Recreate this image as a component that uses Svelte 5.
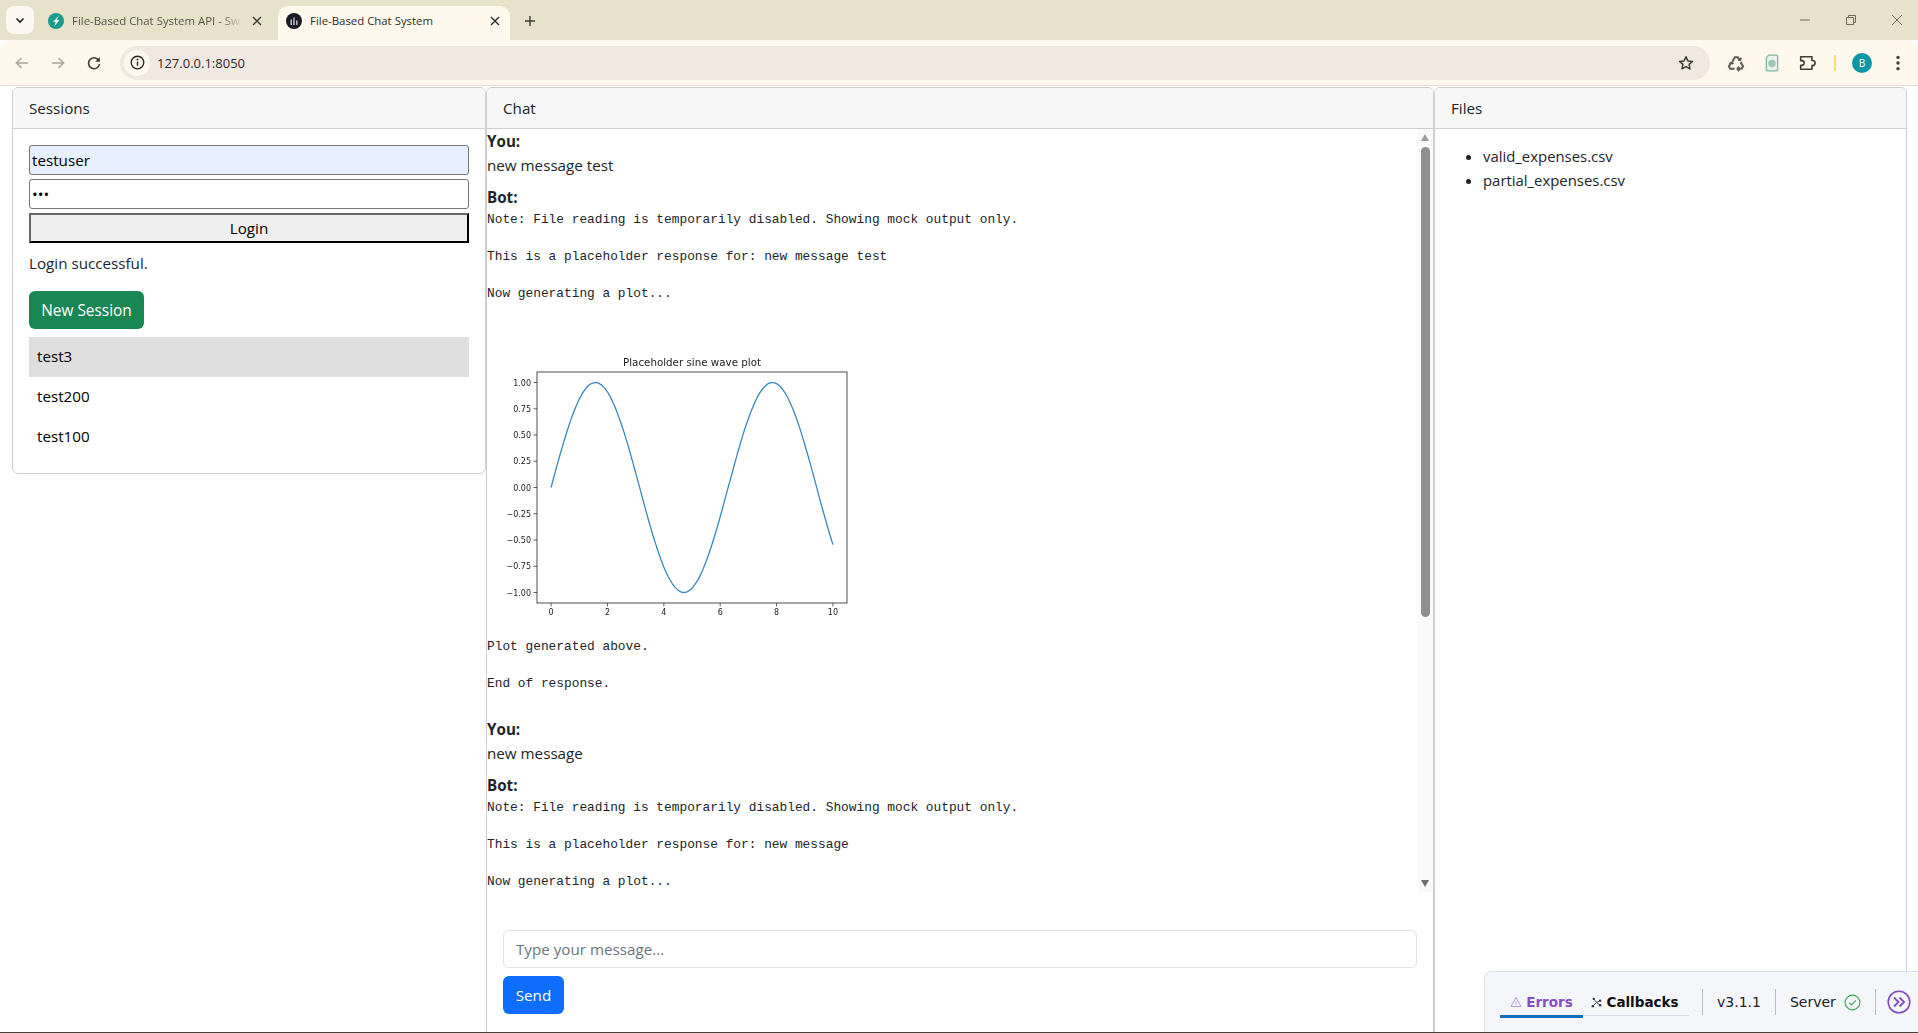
<script>
	const sessions = ['test3', 'test200', 'test100'];
	const files = ['valid_expenses.csv', 'partial_expenses.csv'];
	const messages = ['new message test', 'new message'];

	const note = 'Note: File reading is temporarily disabled. Showing mock output only.';

	// matplotlib default axes inside a 400x300 image
	const axes = { left: 50, top: 36, width: 310, height: 231 };
	const px = (x) => axes.left + ((x + 0.5) / 11) * axes.width;
	const py = (y) => axes.top + ((1.1 - y) / 2.2) * axes.height;

	const curve = Array.from({ length: 101 }, (_, i) => {
		const x = i / 10;
		return `${px(x).toFixed(1)},${py(Math.sin(x)).toFixed(1)}`;
	}).join(' ');

	const xTicks = [0, 2, 4, 6, 8, 10];
	const yTicks = [1, 0.75, 0.5, 0.25, 0, -0.25, -0.5, -0.75, -1];
	const yLabel = (v) => (v < 0 ? '\u2212' : '') + Math.abs(v).toFixed(2);
</script>

<div class="window">
	<div class="tabstrip">
		<button class="tabsearch" aria-label="Search tabs">
			<svg width="12" height="12" viewBox="0 0 12 12"><path d="M2.5 4.5 6 8l3.5-3.5" fill="none" stroke="#1f1f1f" stroke-width="1.6" /></svg>
		</button>
		<div class="tab first">
			<svg class="favicon" viewBox="0 0 16 16"><circle cx="8" cy="8" r="8" fill="#199a8b" /><path d="M11 2.500 5 9h2.800l-1.600 4.500L11.500 7H8.700z" fill="#fff" /></svg>
			<span class="tab-title faded">File-Based Chat System API - Sw</span>
			<svg class="tab-close" viewBox="0 0 10 10"><path d="M1 1l8 8M9 1l-8 8" stroke="#3b3b3b" stroke-width="1.4" /></svg>
		</div>
		<div class="tab active">
			<svg class="favicon" viewBox="0 0 16 16"><circle cx="8" cy="8" r="8" fill="#1a1a22" /><path d="M4.500 6.500h1.400V12H4.500zM7.300 4.500h1.400V12H7.300zM10.100 7.500h1.400V12h-1.400z" fill="#c9c9d2" /></svg>
			<span class="tab-title">File-Based Chat System</span>
			<svg class="tab-close" viewBox="0 0 10 10"><path d="M1 1l8 8M9 1l-8 8" stroke="#2b2b2b" stroke-width="1.4" /></svg>
		</div>
		<svg class="newtab" viewBox="0 0 12 12"><path d="M6 1v10M1 6h10" stroke="#3b3b3b" stroke-width="1.4" /></svg>
		<div class="winctl">
			<svg viewBox="0 0 12 12"><path d="M1 6h10" stroke="#6f6a5c" /></svg>
			<svg viewBox="0 0 12 12"><path d="M1.500 3.500h7v7h-7zM3.500 3.500v-2h7v7h-2" fill="none" stroke="#6f6a5c" /></svg>
			<svg viewBox="0 0 12 12"><path d="M1 1l10 10M11 1 1 11" stroke="#6f6a5c" /></svg>
		</div>
	</div>

	<div class="toolbar">
		<svg class="navicon" viewBox="0 0 16 16"><path d="M14 8H2.500M7.500 3l-5 5 5 5" fill="none" stroke="#a8a59c" stroke-width="1.500" /></svg>
		<svg class="navicon" viewBox="0 0 16 16"><path d="M2 8h11.500M8.500 3l5 5-5 5" fill="none" stroke="#a8a59c" stroke-width="1.500" /></svg>
		<svg class="navicon" viewBox="0 0 16 16"><path d="M13.200 6.300A5.500 5.500 0 1 0 13.500 9" fill="none" stroke="#3f3c33" stroke-width="1.600" /><path d="M13.800 2.200v4.600H9.200z" fill="#3f3c33" /></svg>
		<div class="omnibox">
			<span class="chip">
				<svg viewBox="0 0 16 16" width="15" height="15"><circle cx="8" cy="8" r="6.700" fill="none" stroke="#26241f" stroke-width="1.400" /><path d="M8 7v4.500" stroke="#26241f" stroke-width="1.500" /><circle cx="8" cy="4.800" r="1" fill="#26241f" /></svg>
			</span>
			<span class="url">127.0.0.1:8050</span>
			<svg class="star" viewBox="0 0 16 16"><path d="M8 1.800l1.900 4.100 4.500.5-3.300 3 .9 4.500L8 11.600l-4 2.300.9-4.500-3.300-3 4.500-.5z" fill="none" stroke="#3f3c33" stroke-width="1.500" stroke-linejoin="round" /></svg>
		</div>
		<div class="exts">
			<svg viewBox="0 0 16 16"><path d="M4.800 6.700 7 2.800h2.600l1.400 2.400M9.800 5.300l2.100-.2.500-1.800M12 7.200l2.300 3.700-1.300 2.300h-2.500M10.800 11.200l-1.500 2 1.500 2M6.800 13.200H2.900L1.700 11l1.900-3.200M2.300 8.500l2-.9 1.300 1.400" fill="none" stroke="#5f5c55" stroke-width="1.800" /></svg>
			<svg viewBox="0 0 16 16"><path d="M5 1h7a1 1 0 0 1 1 1v12a1 1 0 0 1-1 1H4a1 1 0 0 1-1-1V3.500z" fill="#eaf3ec" stroke="#7fb8a0" stroke-width="1.200" /><circle cx="8" cy="8.500" r="3.300" fill="#9cc8b5" /></svg>
			<svg viewBox="0 0 16 16"><path d="M1.500 2.500h10v3.200h.5a2.300 2.300 0 0 1 0 4.600h-.5v3.200h-10v-3.400h1a2 2 0 0 0 0-4.200h-1z" fill="none" stroke="#3f3c33" stroke-width="1.400" stroke-linejoin="round" /></svg>
			<span class="ext-sep"></span>
			<span class="avatar">B</span>
			<svg viewBox="0 0 16 16"><circle cx="8" cy="3" r="1.500" fill="#3f3c33" /><circle cx="8" cy="8" r="1.500" fill="#3f3c33" /><circle cx="8" cy="13" r="1.500" fill="#3f3c33" /></svg>
		</div>
	</div>

	<main class="page">
		<section class="card sessions">
			<div class="card-header">Sessions</div>
			<div class="card-body">
				<input class="field autofill" type="text" value="testuser" />
				<input class="field" type="password" value="abc" />
				<button class="login">Login</button>
				<p class="status">Login successful.</p>
				<button class="new-session">New Session</button>
				<ul class="session-list">
					{#each sessions as name, i}
						<li class:selected={i === 0}>{name}</li>
					{/each}
				</ul>
			</div>
		</section>

		<section class="card chat">
			<div class="card-header">Chat</div>
			<div class="log">
				{#each messages as text}
					<div class="you"><strong>You:</strong><div>{text}</div></div>
					<div class="bot">
						<strong>Bot:</strong>
						<pre>{note}

This is a placeholder response for: {text}

Now generating a plot...</pre>
						<svg class="plot" width="400" height="300" viewBox="0 0 400 300">
							<text class="title" x="205" y="30" text-anchor="middle">Placeholder sine wave plot</text>
							<rect x={axes.left} y={axes.top} width={axes.width} height={axes.height} fill="#fff" stroke="#222" stroke-width="0.8" />
							{#each yTicks as v}
								<line x1={axes.left - 3.500} x2={axes.left} y1={py(v)} y2={py(v)} stroke="#222" stroke-width="0.7" />
								<text class="tick" x={axes.left - 6} y={py(v) + 3} text-anchor="end">{yLabel(v)}</text>
							{/each}
							{#each xTicks as v}
								<line x1={px(v)} x2={px(v)} y1={axes.top + axes.height} y2={axes.top + axes.height + 3.500} stroke="#222" stroke-width="0.7" />
								<text class="tick" x={px(v)} y={axes.top + axes.height + 12} text-anchor="middle">{v}</text>
							{/each}
							<polyline points={curve} fill="none" stroke="#3a87bd" stroke-width="1.300" />
						</svg>
						<pre>Plot generated above.

End of response.</pre>
					</div>
				{/each}
				<div class="scrollbar">
					<span class="arrow up"></span>
					<span class="thumb"></span>
					<span class="arrow down"></span>
				</div>
			</div>
			<div class="composer">
				<input class="message" type="text" placeholder="Type your message..." />
				<button class="send">Send</button>
			</div>
		</section>

		<section class="card files">
			<div class="card-header">Files</div>
			<ul class="file-list">
				{#each files as file}
					<li>{file}</li>
				{/each}
			</ul>
		</section>
	</main>

	<div class="debug">
		<div class="debug-tabs">
			<span class="debug-tab errors">
				<svg viewBox="0 0 12 12" width="12" height="12"><path d="M6 1.500 11 10.500H1z M6 5v2.800M6 8.500v.8" fill="none" stroke="#b79ada" stroke-width="1" /></svg>
				Errors
			</span>
			<span class="debug-tab callbacks">
				<svg viewBox="0 0 12 12" width="11" height="11"><path d="M3 2l3 4-4 4M6 6l4 3M6 6l4-2" fill="none" stroke="#333" stroke-width="1" /><circle cx="3" cy="2" r="1.300" fill="#333" /><circle cx="2" cy="10" r="1.300" fill="#333" /><circle cx="10" cy="9" r="1.300" fill="#333" /><circle cx="10" cy="4" r="1.300" fill="#333" /></svg>
				Callbacks
			</span>
		</div>
		<span class="debug-item version">v3.1.1</span>
		<span class="debug-item server">
			Server
			<svg viewBox="0 0 18 18" width="17" height="17"><circle cx="9" cy="9" r="7.800" fill="none" stroke="#3aa655" stroke-width="1.200" /><path d="M5.500 9.300 8 11.700l4.500-5" fill="none" stroke="#3aa655" stroke-width="1.200" /></svg>
		</span>
		<span class="debug-item toggle">
			<svg viewBox="0 0 24 24" width="24" height="24"><circle cx="12" cy="12" r="10.800" fill="none" stroke="#7f4bc4" stroke-width="1.600" /><path d="M7 7.500 11.500 12 7 16.500M12.500 7.500 17 12l-4.500 4.500" fill="none" stroke="#7f4bc4" stroke-width="1.800" /></svg>
		</span>
	</div>

	<div class="window-edge"></div>
</div>

<style>
	:global(body) {
		margin: 0;
		background: #fff;
		font-family: "Open Sans", "Liberation Sans", sans-serif;
		overflow: hidden;
	}
	.window {
		position: relative;
		display: flex;
		flex-direction: column;
		height: 1033px;
		color: #212529;
		font-size: 15.2px;
	}

	/* browser chrome */
	.tabstrip {
		display: flex;
		align-items: flex-end;
		height: 40px;
		background: #e9e2cb;
		flex: none;
	}
	.tabsearch {
		align-self: flex-start;
		width: 28px;
		height: 28px;
		margin: 6px 0 0 6px;
		padding: 0;
		border: 0;
		border-radius: 8px;
		background: #fdf9f2;
		display: flex;
		align-items: center;
		justify-content: center;
	}
	.tab {
		display: flex;
		align-items: center;
		width: 232px;
		height: 34px;
		margin-left: 2px;
		padding: 0 8px 5px 12px;
		box-sizing: border-box;
		font-size: 11.4px;
		color: #2f2e2a;
	}
	.tab.first {
		width: 242px;
	}
	.tab.first .tab-close {
		margin-right: 8px;
		margin-left: 10px;
	}
	.tab.active {
		background: #fff8ec;
		border-radius: 10px 10px 0 0;
		margin-left: 0;
		padding-left: 8px;
	}
	.favicon {
		width: 16px;
		height: 16px;
		flex: none;
		margin-right: 8px;
	}
	.tab-title {
		flex: 1;
		white-space: nowrap;
		overflow: hidden;
	}
	.tab-title.faded {
		color: #57544a;
		-webkit-mask-image: linear-gradient(to right, #000 88%, transparent);
		mask-image: linear-gradient(to right, #000 88%, transparent);
	}
	.tab-close {
		width: 10px;
		height: 10px;
		flex: none;
		margin: 0 2px 0 16px;
	}
	.newtab {
		width: 12px;
		height: 12px;
		margin: 0 0 13px 14px;
	}
	.winctl {
		display: flex;
		align-self: flex-start;
		gap: 34px;
		margin: 14px 15px 0 auto;
	}
	.winctl svg {
		width: 12px;
		height: 12px;
	}
	.toolbar {
		display: flex;
		align-items: center;
		height: 46px;
		flex: none;
		padding-left: 14px;
		background: #fff8ec;
		border-bottom: 1px solid #e6dfd2;
		box-sizing: border-box;
		border-radius: 10px 10px 0 0;
	}
	.navicon {
		width: 16px;
		height: 16px;
		margin-right: 20px;
	}
	.omnibox {
		display: flex;
		align-items: center;
		width: 1590px;
		height: 34px;
		margin-left: -2px;
		border-radius: 17px;
		background: #f0e8e1;
	}
	.chip {
		display: flex;
		align-items: center;
		justify-content: center;
		width: 26px;
		height: 26px;
		margin-left: 4px;
		border-radius: 50%;
		background: #fff8ec;
	}
	.url {
		margin-left: 7px;
		font-size: 13px;
		color: #2b2a26;
	}
	.star {
		width: 16px;
		height: 16px;
		margin: 0 16px 0 auto;
	}
	.exts {
		display: flex;
		align-items: center;
		margin-left: 17px;
	}
	.exts svg {
		width: 18px;
		height: 18px;
		margin-right: 18px;
	}
	.exts svg:last-child {
		margin: 0;
	}
	.ext-sep {
		width: 2px;
		height: 16px;
		margin: 0 16px 0 -1px;
		background: #f5dd85;
	}
	.avatar {
		display: flex;
		align-items: center;
		justify-content: center;
		width: 20px;
		height: 20px;
		margin-right: 17px;
		border-radius: 50%;
		background: #0a97a8;
		color: #fff;
		font-size: 10px;
	}

	/* page */
	.page {
		flex: 1;
		min-height: 0;
		display: grid;
		grid-template-columns: 474px 948px 473px;
		padding: 1px 11px 0 12px;
		align-items: stretch;
	}
	.card {
		display: flex;
		flex-direction: column;
		border: 1px solid #cfcfcf;
		border-radius: 6px;
		min-height: 0;
		background: #fff;
	}
	.card.sessions {
		align-self: start;
	}
	.card.chat {
		border-radius: 6px 6px 0 0;
	}
	.card-header {
		height: 41px;
		flex: none;
		box-sizing: border-box;
		padding: 8px 16px;
		line-height: 24px;
		background: #f7f7f7;
		border-bottom: 1px solid #cfcfcf;
		border-radius: 5px 5px 0 0;
	}
	.card-body {
		display: flex;
		flex-direction: column;
		padding: 16px;
	}
	.field {
		box-sizing: border-box;
		width: 100%;
		height: 30px;
		margin: 0 0 4px;
		padding: 1px 2px;
		border: 1px solid #767676;
		border-radius: 3px;
		font: inherit;
		color: #000;
		outline: none;
	}
	.field.autofill {
		background: #e8f0fe;
	}
	.login {
		height: 30px;
		padding: 0;
		border: 2px solid;
		border-color: #666 #000 #000 #666;
		background: #efefef;
		font: inherit;
		color: #000;
	}
	.status {
		margin: 8px 0 16px;
		line-height: 24px;
	}
	.new-session {
		align-self: flex-start;
		width: 115px;
		height: 38px;
		padding: 0;
		border: 0;
		border-radius: 6px;
		background: #198754;
		color: #fff;
		font: inherit;
		font-size: 15.4px;
	}
	.session-list {
		list-style: none;
		margin: 8px 0 0;
		padding: 0;
	}
	.session-list li {
		height: 40px;
		padding: 0 8px;
		line-height: 39px;
		color: #000;
	}
	.session-list li.selected {
		background: #dfdfdf;
	}

	/* chat */
	.log {
		position: relative;
		height: 763px;
		flex: none;
		overflow: hidden;
		line-height: 24px;
		box-sizing: border-box;
	}
	.you {
		margin-bottom: 8px;
	}
	.bot {
		margin-bottom: 24px;
	}
	.bot strong + pre {
		padding-top: 2px;
	}
	.log strong {
		display: block;
		color: #212529;
	}
	pre {
		margin: 0;
		font-family: "Liberation Mono", "DejaVu Sans Mono", monospace;
		font-size: 12.83px;
		line-height: 18.5px;
		color: #212529;
	}
	.plot {
		display: block;
		margin: 32px 0 2px;
		filter: blur(0.25px);
	}
	.plot text {
		font-family: "DejaVu Sans", sans-serif;
		fill: #222;
	}
	.plot .title {
		font-size: 10.3px;
	}
	.plot .tick {
		font-size: 8px;
	}
	.scrollbar {
		position: absolute;
		top: 0;
		right: 0;
		bottom: 0;
		width: 16px;
		display: flex;
		flex-direction: column;
		align-items: center;
		background: #fafafa;
	}
	.arrow {
		flex: none;
		width: 0;
		height: 0;
		border-left: 4.500px solid transparent;
		border-right: 4.500px solid transparent;
	}
	.arrow.up {
		margin-top: 5px;
		border-bottom: 7px solid #9a9a9a;
	}
	.arrow.down {
		margin-top: auto;
		margin-bottom: 5px;
		border-top: 7px solid #6f6f6f;
	}
	.thumb {
		width: 9px;
		height: 470px;
		margin-top: 6px;
		border-radius: 5px;
		background: #8f8f8f;
	}
	.composer {
		padding: 38px 16px 0;
		font-size: 15.2px;
	}
	.message {
		display: block;
		box-sizing: border-box;
		width: 914px;
		height: 38px;
		padding: 6px 12px;
		border: 1px solid #dee2e6;
		border-radius: 6px;
		font: inherit;
		outline: none;
	}
	.message::placeholder {
		color: #6c757d;
		opacity: 1;
	}
	.send {
		display: block;
		width: 61px;
		height: 38px;
		margin-top: 8px;
		padding: 0;
		border: 0;
		border-radius: 6px;
		background: #0d6efd;
		color: #fff;
		font: inherit;
	}

	/* files */
	.card.files {
		border-radius: 6px 6px 0 0;
	}
	.file-list {
		margin: 0;
		padding: 15px 16px 0 48px;
		line-height: 24px;
		font-size: 14.9px;
	}

	/* dash dev tools */
	.debug {
		position: absolute;
		right: 0;
		bottom: 0;
		width: 434px;
		height: 62px;
		box-sizing: border-box;
		display: flex;
		align-items: flex-start;
		padding: 17px 0 0 15px;
		background: #f5f6fa;
		border: 1px solid #dde0ea;
		border-right: 0;
		border-radius: 8px 0 0 0;
		font-family: "DejaVu Sans", sans-serif;
		font-size: 14px;
	}
	.debug-tabs {
		display: flex;
		height: 26px;
		border-bottom: 1.500px solid #d5d8e2;
		margin-right: 13px;
		width: 189px;
		flex: none;
	}
	.debug-tab {
		display: flex;
		align-items: center;
		justify-content: center;
		gap: 4px;
		height: 26px;
		font-weight: 700;
		font-size: 13.5px;
	}
	.debug-tab.errors {
		width: 83px;
		flex: none;
		color: #8350c4;
		border-bottom: 3px solid #0d6ebd;
	}
	.debug-tab.callbacks {
		width: 104px;
		flex: none;
		color: #111;
	}
	.debug-item {
		display: flex;
		align-items: center;
		height: 26px;
		border-left: 1px solid #b9bccf;
		color: #222;
	}
	.version {
		padding: 0 14px;
	}
	.server {
		gap: 8px;
		padding: 0 14px;
	}
	.toggle {
		padding-left: 11px;
	}
	.window-edge {
		position: absolute;
		left: 0;
		right: 0;
		bottom: 0;
		height: 1px;
		background: #3b4438;
	}
</style>
